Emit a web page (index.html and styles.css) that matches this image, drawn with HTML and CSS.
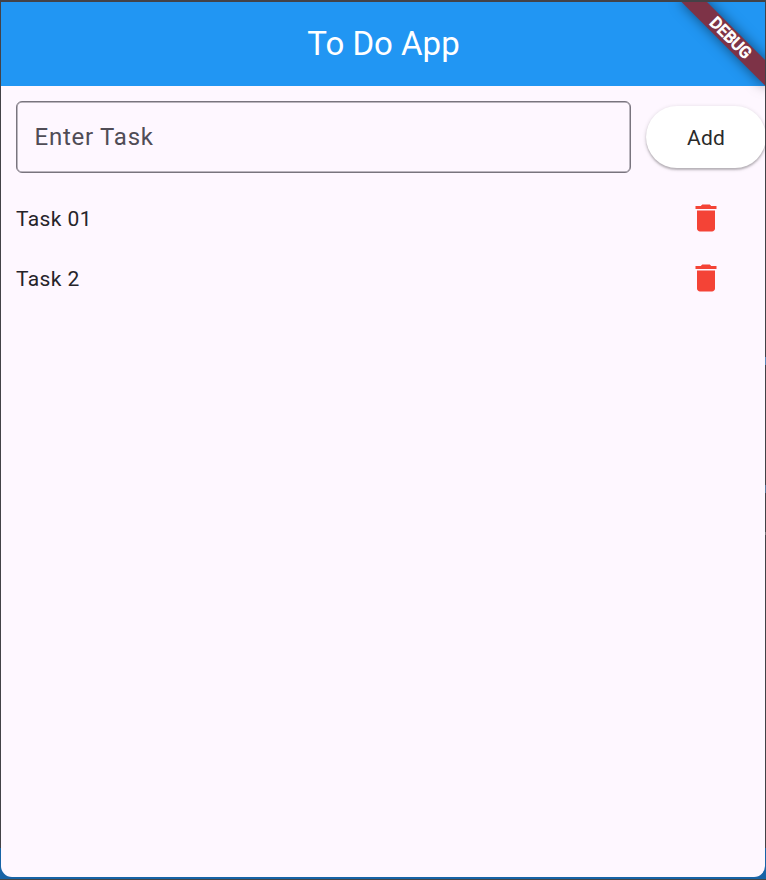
FILE: index.html
```
<!DOCTYPE html>
<html lang="en">
<head>
<meta charset="utf-8">
<title>To Do App</title>
<link rel="stylesheet" href="styles.css">
</head>
<body>
<div class="desktop">
  <main class="window">
    <header class="app-bar"><h1>To Do App</h1></header>
    <form class="entry">
      <input class="task-input" type="text" placeholder="Enter Task" aria-label="Enter Task">
      <button class="add" type="button">Add</button>
    </form>
    <ul class="tasks">
      <li class="task"><span>Task 01</span>
        <svg class="delete" viewBox="0 0 24 24"><path d="M6 19c0 1.1.9 2 2 2h8c1.1 0 2-.9 2-2V7H6v12zM19 4h-3.5l-1-1h-5l-1 1H5v2h14V4z"/></svg></li>
      <li class="task"><span>Task 2</span>
        <svg class="delete" viewBox="0 0 24 24"><path d="M6 19c0 1.1.9 2 2 2h8c1.1 0 2-.9 2-2V7H6v12zM19 4h-3.5l-1-1h-5l-1 1H5v2h14V4z"/></svg></li>
    </ul>
    <div class="banner">DEBUG</div>
  </main>
</div>
</body>
</html>
```
FILE: styles.css
```
* { box-sizing: border-box; }
body { margin: 0; font-family: Roboto, sans-serif; }
.desktop {
  height: 880px;
  padding: 2px 1px 3px;
  overflow: hidden;
  background:
    linear-gradient(#464646, #464646) 0 100% / 100% 1px no-repeat,
    linear-gradient(#5a87b8, #5a87b8) 100% 357px / 1px 8px no-repeat,
    linear-gradient(#58789b, #58789b) 100% 485px / 1px 8px no-repeat,
    linear-gradient(#77777b, #77777b) 100% 532px / 1px 3px no-repeat,
    linear-gradient(#434247 0 848px, #1763a6 848px);
}
.window {
  position: relative;
  height: 875px;
  overflow: hidden;
  border-radius: 0 0 11px 11px;
  background: #fef7ff;
}
.app-bar {
  height: 84px;
  display: flex;
  align-items: center;
  justify-content: center;
  background: #2196f3;
  color: #fff;
}
h1 { margin: 0; padding-left: 1px; font-size: 33px; font-weight: 400; line-height: 42px; }
.entry { display: flex; align-items: center; gap: 15px; padding: 15px 0 0 15px; }
.task-input {
  flex: 1;
  min-width: 0;
  height: 72px;
  padding: 0 17.5px;
  border: 1.5px solid #79747e;
  border-radius: 6px;
  box-shadow: inset 0 0 0 .5px #79747e;
  background: transparent;
  font: 300 24px Roboto, sans-serif;
  font-weight: 400;
  letter-spacing: .75px;
  outline: none;
}
.task-input::placeholder { color: #504c56; opacity: 1; }
.add {
  width: 120px;
  height: 62px;
  margin-right: -1px;
  padding: 2px 0 0;
  border: 0;
  border-radius: 31px;
  background: #fff;
  color: #2a2a2a;
  font: 21px Roboto, sans-serif;
  letter-spacing: .15px;
  box-shadow: 0 2px 2px rgba(0,0,0,.2), 0 1px 4px rgba(0,0,0,.16);
}
.tasks { margin: 15px 0 0; padding: 0 41px 0 15px; list-style: none; }
.task {
  height: 60px;
  display: flex;
  align-items: center;
  justify-content: space-between;
  color: #26242a;
  font-size: 21px;
  letter-spacing: .4px;
}
.task span { padding-top: 2px; }
.delete { width: 36px; height: 36px; fill: #f44336; }
.banner {
  position: absolute;
  top: 41px;
  right: -60px;
  width: 120px;
  height: 18px;
  transform-origin: 60px -41px;
  transform: rotate(45deg);
  background: #7d3347;
  box-shadow: 0 0 13px rgba(0,0,0,.5);
  color: #fff;
  font-size: 16px;
  font-weight: 400;
  -webkit-text-stroke: 1px #fff;
  letter-spacing: .1px;
  text-indent: 2px;
  line-height: 18px;
  text-align: center;
}
```
